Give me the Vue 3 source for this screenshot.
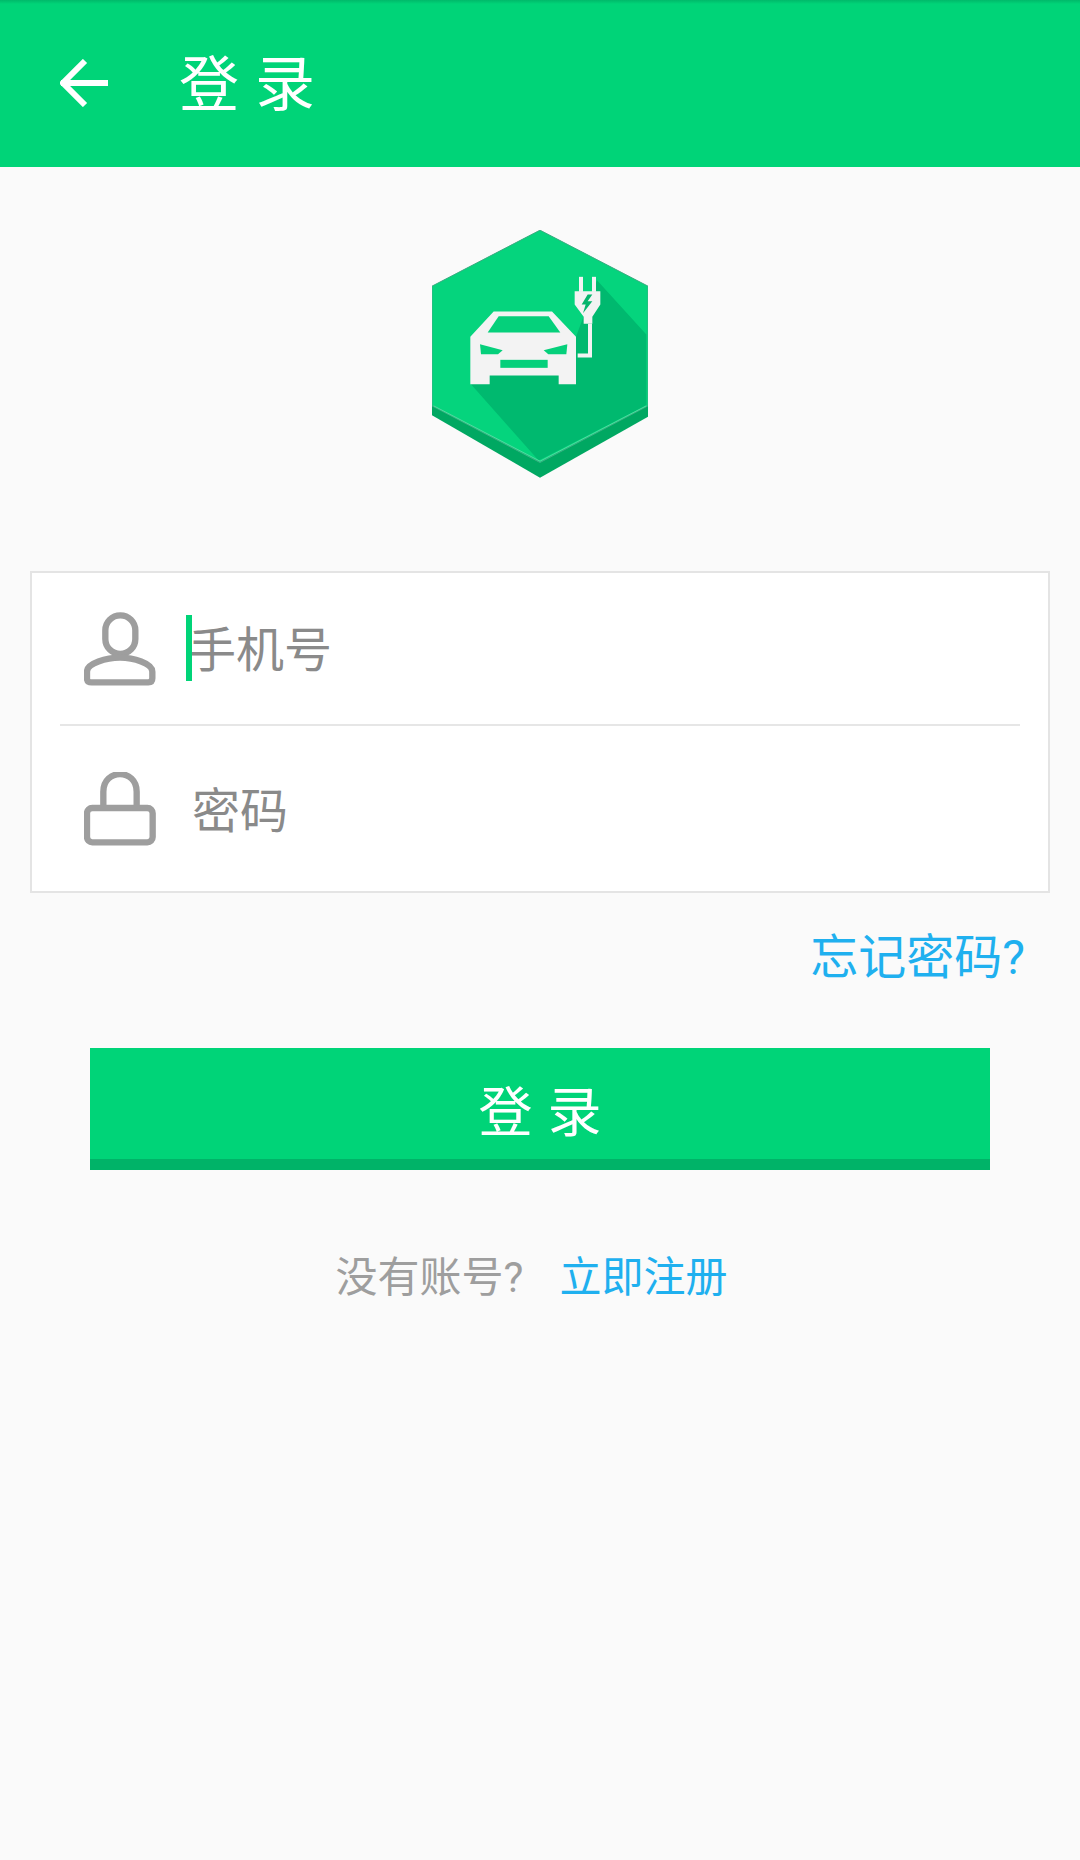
<template>
  <div class="page">
    <header class="app-bar">
      <svg class="back" viewBox="0 0 48 48" fill="none" stroke="#fff" stroke-width="6">
        <path d="M1 24H48" />
        <path d="M25 2L3 24L25 46" />
      </svg>
      <h1 class="title">登录</h1>
    </header>

    <div class="logo-wrap">
      <svg class="logo" viewBox="65 45 648 743">
        <polygon points="389,45 713,213 713,605 389,788 65,600 65,213" fill="#00a862" />
        <polygon points="389,45 713,213 713,572 389,742 65,572 65,213" fill="#05d47d" stroke="#3fae84" stroke-width="3" />
        <polygon points="180,505 385,736 708,570 708,358 560,195 497,365" fill="#00b96f" />
        <polyline points="70,572 389,738 708,572" fill="none" stroke="#4fdc9f" stroke-width="3" />
        <!-- car -->
        <path d="M250 289H425L497 365V507H445V481H238V507H180V365Z" fill="#f3f3f3" />
        <polygon points="265,303 415,303 450,352 232,352" fill="#05d07b" />
        <polygon points="209,387 277,405 263,417 212,417" fill="#05d07b" />
        <polygon points="471,387 400,405 414,417 468,417" fill="#05d07b" />
        <rect x="270" y="434" width="142" height="24" fill="#05d07b" />
        <!-- plug -->
        <rect x="506" y="185" width="12" height="45" fill="#f3f3f3" />
        <rect x="545" y="185" width="12" height="45" fill="#f3f3f3" />
        <path d="M493 228H570V268L546 305V326H520V305L493 268Z" fill="#f3f3f3" />
        <path d="M539 326V421H502" fill="none" stroke="#f3f3f3" stroke-width="12" />
        <polygon points="532,238 514,268 526,268 518,294 546,258 532,258 546,238" fill="#05b56c" />
      </svg>
    </div>

    <div class="form-card">
      <div class="field">
        <svg class="field-icon" viewBox="192 156 216 222" fill="none" stroke="#9e9e9e" stroke-width="19">
          <rect x="256" y="166" width="90" height="116" rx="45" />
          <path d="M215 367H385Q397 367 397 355V335C397 310 340 293 300 293C260 293 201 310 201 335V355Q201 367 215 367Z" />
        </svg>
        <span class="cursor"></span>
        <span class="placeholder">手机号</span>
      </div>
      <div class="divider"></div>
      <div class="field second">
        <svg class="field-icon" viewBox="192 634 216 220" fill="none" stroke="#9e9e9e" stroke-width="19">
          <path d="M250 738V692C250 622 350 622 350 692V738" />
          <rect x="201" y="741" width="197" height="103" rx="16" />
        </svg>
        <span class="placeholder">密码</span>
      </div>
    </div>

    <div class="forgot-row">
      <a class="link forgot">忘记密码?</a>
    </div>

    <button class="submit">登录</button>

    <div class="register">
      <span class="muted">没有账号?</span>
      <a class="link">立即注册</a>
    </div>
  </div>
</template>

<script setup>
</script>

<style>
html,
body {
  margin: 0;
  background: #fafafa;
}
</style>

<style scoped>
.page {
  width: 1080px;
  min-height: 1860px;
  background: #fafafa;
  font-family: Roboto, "Noto Sans CJK SC", "Noto Sans", sans-serif;
  display: flex;
  flex-direction: column;
}

.app-bar {
  height: 167px;
  box-sizing: border-box;
  padding-left: 60px;
  display: flex;
  align-items: center;
  background: linear-gradient(#00b96a 0, #00d478 4px);
}
.back {
  width: 48px;
  height: 48px;
  margin-bottom: 2px;
}
.title {
  margin: 4px 0 0 71px;
  font-size: 60px;
  font-weight: 400;
  letter-spacing: 16px;
  line-height: 1;
  color: #fff;
}

.logo-wrap {
  display: flex;
  justify-content: center;
  margin-top: 63px;
}
.logo {
  width: 216px;
  height: 248px;
  filter: blur(0.4px);
}

.form-card {
  margin: 93px 30px 0;
  height: 322px;
  box-sizing: border-box;
  background: #fff;
  border: 2px solid #e4e4e4;
  display: flex;
  flex-direction: column;
}
.field {
  position: relative;
  height: 151px;
  display: flex;
  align-items: center;
  padding-left: 52px;
}
.field.second {
  height: 165px;
}
.field-icon {
  width: 72px;
  height: 74px;
  flex-shrink: 0;
  filter: blur(0.5px);
}
.placeholder {
  margin: 4px 0 0 32px;
  font-size: 48px;
  line-height: 1;
  color: #8a8a8a;
}
.second .placeholder {
  margin: 6px 0 0 36px;
}
.cursor {
  position: absolute;
  left: 154px;
  top: 42px;
  width: 6px;
  height: 66px;
  background: #00d478;
}
.divider {
  height: 2px;
  margin: 0 28px;
  background: #e6e6e6;
}

.forgot-row {
  display: flex;
  justify-content: flex-end;
  padding: 37px 55px 0 0;
}
.link {
  color: #1fb0ef;
}
.forgot {
  font-size: 48px;
  line-height: 56px;
}

.submit {
  margin: 62px 90px 0;
  height: 122px;
  box-sizing: border-box;
  border: none;
  border-bottom: 11px solid #00b368;
  background: #00d478;
  color: #fff;
  font-family: inherit;
  font-size: 54px;
  letter-spacing: 15px;
  padding: 10px 0 0 15px;
}

.register {
  margin-top: 83px;
  padding-right: 17px;
  display: flex;
  justify-content: center;
  gap: 36px;
  font-size: 42px;
  line-height: 50px;
}
.muted {
  color: #9e9e9e;
}
</style>
